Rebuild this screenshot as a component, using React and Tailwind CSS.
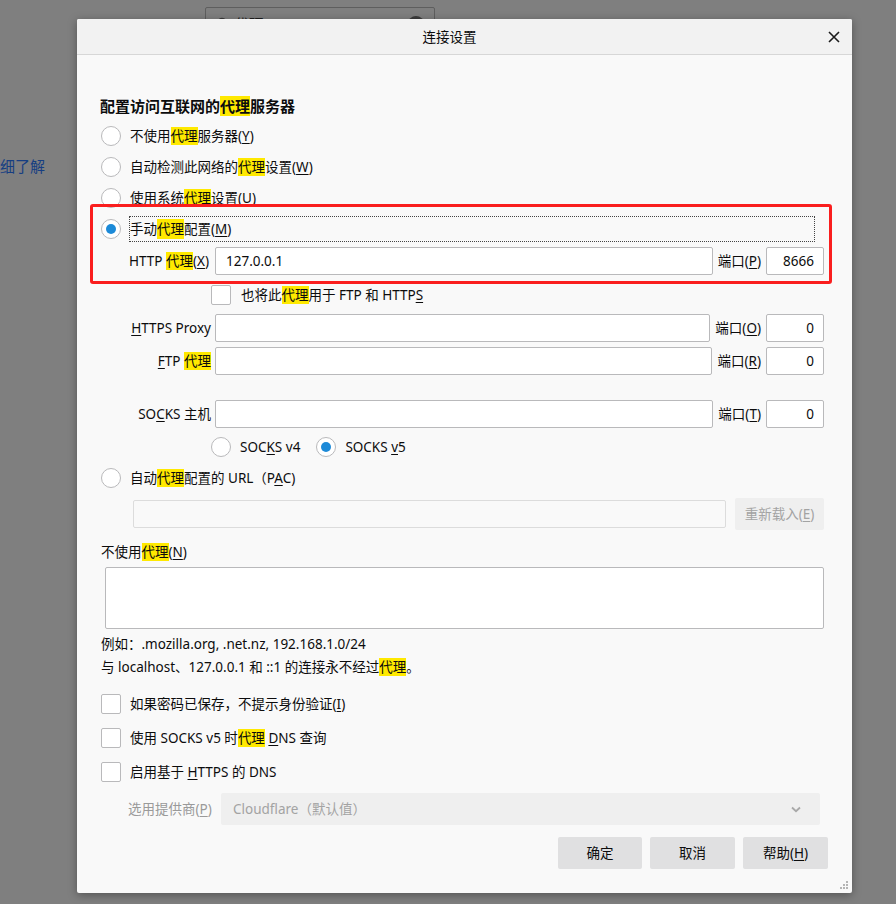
import React from "react";

// search highlight + access key underline
const H = ({ children }) => <span className="bg-[#ffe900]">{children}</span>;
const U = ({ children }) => <span className="underline decoration-1 underline-offset-2">{children}</span>;

const Radio = ({ checked }) => (
  <span className="flex h-5 w-5 shrink-0 items-center justify-center rounded-full border border-[#b9b9bb] bg-white">
    {checked && <span className="h-[10px] w-[10px] rounded-full bg-[#1c8ad8]" />}
  </span>
);

const Checkbox = () => (
  <span className="h-5 w-5 shrink-0 rounded-[2px] border border-[#b9b9bb] bg-white" />
);

const Field = ({ value, className = "" }) => (
  <div
    className={`flex h-[28px] items-center rounded-[2px] border border-[#b9b9bb] bg-white px-[10px] ${className}`}
  >
    {value}
  </div>
);

const ProxyRow = ({ label, portKey, port, value, className = "" }) => (
  <div className={`flex h-[28px] items-center ${className}`}>
    <div className="w-[115px] shrink-0 pr-[4px] text-right">{label}</div>
    <Field value={value} className="min-w-0 flex-1" />
    <span className="ml-[5px] shrink-0">
      端口(<U>{portKey}</U>)
    </span>
    <Field value={port} className="ml-[5px] w-[58px] shrink-0 justify-end pr-[9px]" />
  </div>
);

const RadioRow = ({ children, checked }) => (
  <div className="flex h-[31px] items-center">
    <span className="ml-[1px]">
      <Radio checked={checked} />
    </span>
    <span className="ml-[9px]">{children}</span>
  </div>
);

const CheckRow = ({ children, className = "" }) => (
  <div className={`flex h-5 items-center ${className}`}>
    <span className="ml-[1px] flex">
      <Checkbox />
    </span>
    <span className="ml-[9px]">{children}</span>
  </div>
);

export default function App() {
  return (
    <div className="relative h-[904px] w-[896px] overflow-hidden bg-[#7f7f7f] font-['Noto_Sans','Noto_Sans_CJK_SC',sans-serif] text-[13.5px] leading-[20px] text-[#0c0c0d]">
      {/* page behind the dialog */}
      <div className="ml-[205px] mt-[7px] flex h-[34px] w-[230px] items-center rounded-[2px] border border-[#5e5e5e] px-[10px] text-[15px] text-[#1f1f1f]">
        <svg width="14" height="14" viewBox="0 0 14 14" className="shrink-0">
          <circle cx="6" cy="6" r="4.5" fill="none" stroke="#3a3a3a" strokeWidth="1.5" />
          <path d="M9.5 9.5 13 13" stroke="#3a3a3a" strokeWidth="1.5" />
        </svg>
        <span className="ml-[4px]">代理</span>
        <span className="ml-auto h-4 w-4 rounded-full bg-[#3c3c3c]" />
      </div>
      <div className="mt-[115px] text-[15px] leading-[20px] text-[#163e82]">细了解</div>

      {/* dialog */}
      <div className="absolute left-[77px] top-[19px] flex h-[874px] w-[775px] flex-col rounded-[2px] bg-[#f9f9f9] shadow-[0_2px_10px_rgba(0,0,0,0.35)]">
        {/* Header */}
        <div className="flex h-[36px] shrink-0 items-center rounded-t-[2px] border-b border-[#d7d7d7] bg-[#f2f2f2]">
          <div className="flex-1 text-center">连接设置</div>
          <div className="flex w-[30px] items-center pl-[6px]">
            <svg width="12" height="12" viewBox="0 0 12 12">
              <path d="M1 1 11 11M11 1 1 11" stroke="#1c1c1c" strokeWidth="1.6" />
            </svg>
          </div>
        </div>

        {/* Body */}
        <div className="relative flex flex-1 flex-col pl-[23px] pr-[28px] pt-[41px]">
          <div className="h-5 text-[15px] font-bold leading-[20px]">
            配置访问互联网的<H>代理</H>服务器
          </div>

          <div className="mt-[4px]">
            <RadioRow>
              不使用<H>代理</H>服务器(<U>Y</U>)
            </RadioRow>
            <RadioRow>
              自动检测此网络的<H>代理</H>设置(<U>W</U>)
            </RadioRow>
            <RadioRow>
              使用系统<H>代理</H>设置(<U>U</U>)
            </RadioRow>
          </div>

          {/* manual proxy, marked in red */}
          <div className="relative">
            <div className="flex h-[31px] items-center">
              <span className="ml-[1px]">
                <Radio checked />
              </span>
              <span className="ml-[8px] mr-[9px] flex h-[26px] flex-1 items-center border border-dotted border-[#444]">
                手动<H>代理</H>配置(<U>M</U>)
              </span>
            </div>
            <div className="mt-[3px] flex h-[28px] items-center">
              <div className="w-[115px] shrink-0 pl-[29px]">
                HTTP <H>代理</H>(<U>X</U>)
              </div>
              <Field value="127.0.0.1" className="min-w-0 flex-1" />
              <span className="ml-[5px] shrink-0">
                端口(<U>P</U>)
              </span>
              <Field value="8666" className="ml-[5px] w-[58px] shrink-0 justify-end pr-[9px]" />
            </div>
            <div className="pointer-events-none absolute -bottom-[9px] -left-[10px] -right-[8px] -top-[9px] rounded-[3px] border-[3px] border-[#fa1e1e]" />
          </div>

          <div className="ml-[111px] mt-[10px] flex h-5 items-center">
            <Checkbox />
            <span className="ml-[10px]">
              也将此<H>代理</H>用于 FTP 和 HTTP<U>S</U>
            </span>
          </div>

          <ProxyRow
            className="mt-[9px]"
            label={
              <>
                <U>H</U>TTPS Proxy
              </>
            }
            portKey="O"
            port="0"
          />
          <ProxyRow
            className="mt-[5px]"
            label={
              <>
                <U>F</U>TP <H>代理</H>
              </>
            }
            portKey="R"
            port="0"
          />
          <ProxyRow
            className="mt-[25px]"
            label={
              <>
                SO<U>C</U>KS 主机
              </>
            }
            portKey="T"
            port="0"
          />

          <div className="ml-[111px] mt-[9px] flex h-5 items-center">
            <Radio />
            <span className="ml-[9px]">
              SOC<U>K</U>S v4
            </span>
            <span className="ml-[16px]">
              <Radio checked />
            </span>
            <span className="ml-[9px]">
              SOCKS <U>v</U>5
            </span>
          </div>

          <div className="mt-[11px] flex h-5 items-center">
            <span className="ml-[1px]">
              <Radio />
            </span>
            <span className="ml-[9px]">
              自动<H>代理</H>配置的 URL（P<U>A</U>C)
            </span>
          </div>

          <div className="mt-[10px] flex h-[32px] items-center">
            <div className="ml-[33px] h-[28px] flex-1 rounded-[2px] border border-[#dcdcdc] bg-[#f9f9f9]" />
            <div className="ml-[9px] flex h-[32px] w-[89px] items-center justify-center rounded-[2px] bg-[#efefef] text-[#a3a3a3]">
              重新载入(<U>E</U>)
            </div>
          </div>

          <div className="ml-[1px] mt-[12px] h-5">
            不使用<H>代理</H>(<U>N</U>)
          </div>
          <div className="ml-[5px] mt-[5px] h-[62px] rounded-[2px] border border-[#b9b9bb] bg-white" />

          <div className="ml-[1px] mt-[4px] leading-[23px]">
            <div>例如：.mozilla.org, .net.nz, 192.168.1.0/24</div>
            <div>
              与 localhost、127.0.0.1 和 ::1 的连接永不经过<H>代理</H>。
            </div>
          </div>

          <CheckRow className="mt-[15px]">
            如果密码已保存，不提示身份验证(<U>I</U>)
          </CheckRow>
          <CheckRow className="mt-[14px]">
            使用 SOCKS v5 时<H>代理</H> <U>D</U>NS 查询
          </CheckRow>
          <CheckRow className="mt-[14px]">
            启用基于 <U>H</U>TTPS 的 DNS
          </CheckRow>

          <div className="mr-[4px] mt-[11px] flex h-[32px] items-center">
            <span className="ml-[28px] w-[93px] shrink-0 text-[#9a9a9a]">
              选用提供商(<U>P</U>)
            </span>
            <div className="flex h-[32px] flex-1 items-center rounded-[2px] bg-[#efefef] pl-[12px] pr-[19px] text-[#a3a3a3]">
              <span>Cloudflare（默认值）</span>
              <svg width="10" height="7" viewBox="0 0 10 7" className="ml-auto">
                <path d="M1 1.5 5 5.2 9 1.5" fill="none" stroke="#a8a8a8" strokeWidth="1.8" />
              </svg>
            </div>
          </div>

          {/* Actions */}
          <div className="-mr-[4px] mt-[12px] flex justify-end gap-[8px]">
            <button className="h-[32px] w-[84px] rounded-[2px] bg-[#e0e0e1]">确定</button>
            <button className="h-[32px] w-[85px] rounded-[2px] bg-[#e0e0e1]">取消</button>
            <button className="h-[32px] w-[85px] rounded-[2px] bg-[#e0e0e1]">
              帮助(<U>H</U>)
            </button>
          </div>

          {/* resize grip */}
          <svg width="9" height="9" viewBox="0 0 9 9" className="absolute bottom-[3px] right-[3px]">
            <rect x="6" y="0" width="2" height="2" fill="#b5b5b5" />
            <rect x="3" y="3" width="2" height="2" fill="#b5b5b5" />
            <rect x="6" y="3" width="2" height="2" fill="#b5b5b5" />
            <rect x="0" y="6" width="2" height="2" fill="#b5b5b5" />
            <rect x="3" y="6" width="2" height="2" fill="#b5b5b5" />
            <rect x="6" y="6" width="2" height="2" fill="#b5b5b5" />
          </svg>
        </div>
      </div>
    </div>
  );
}
